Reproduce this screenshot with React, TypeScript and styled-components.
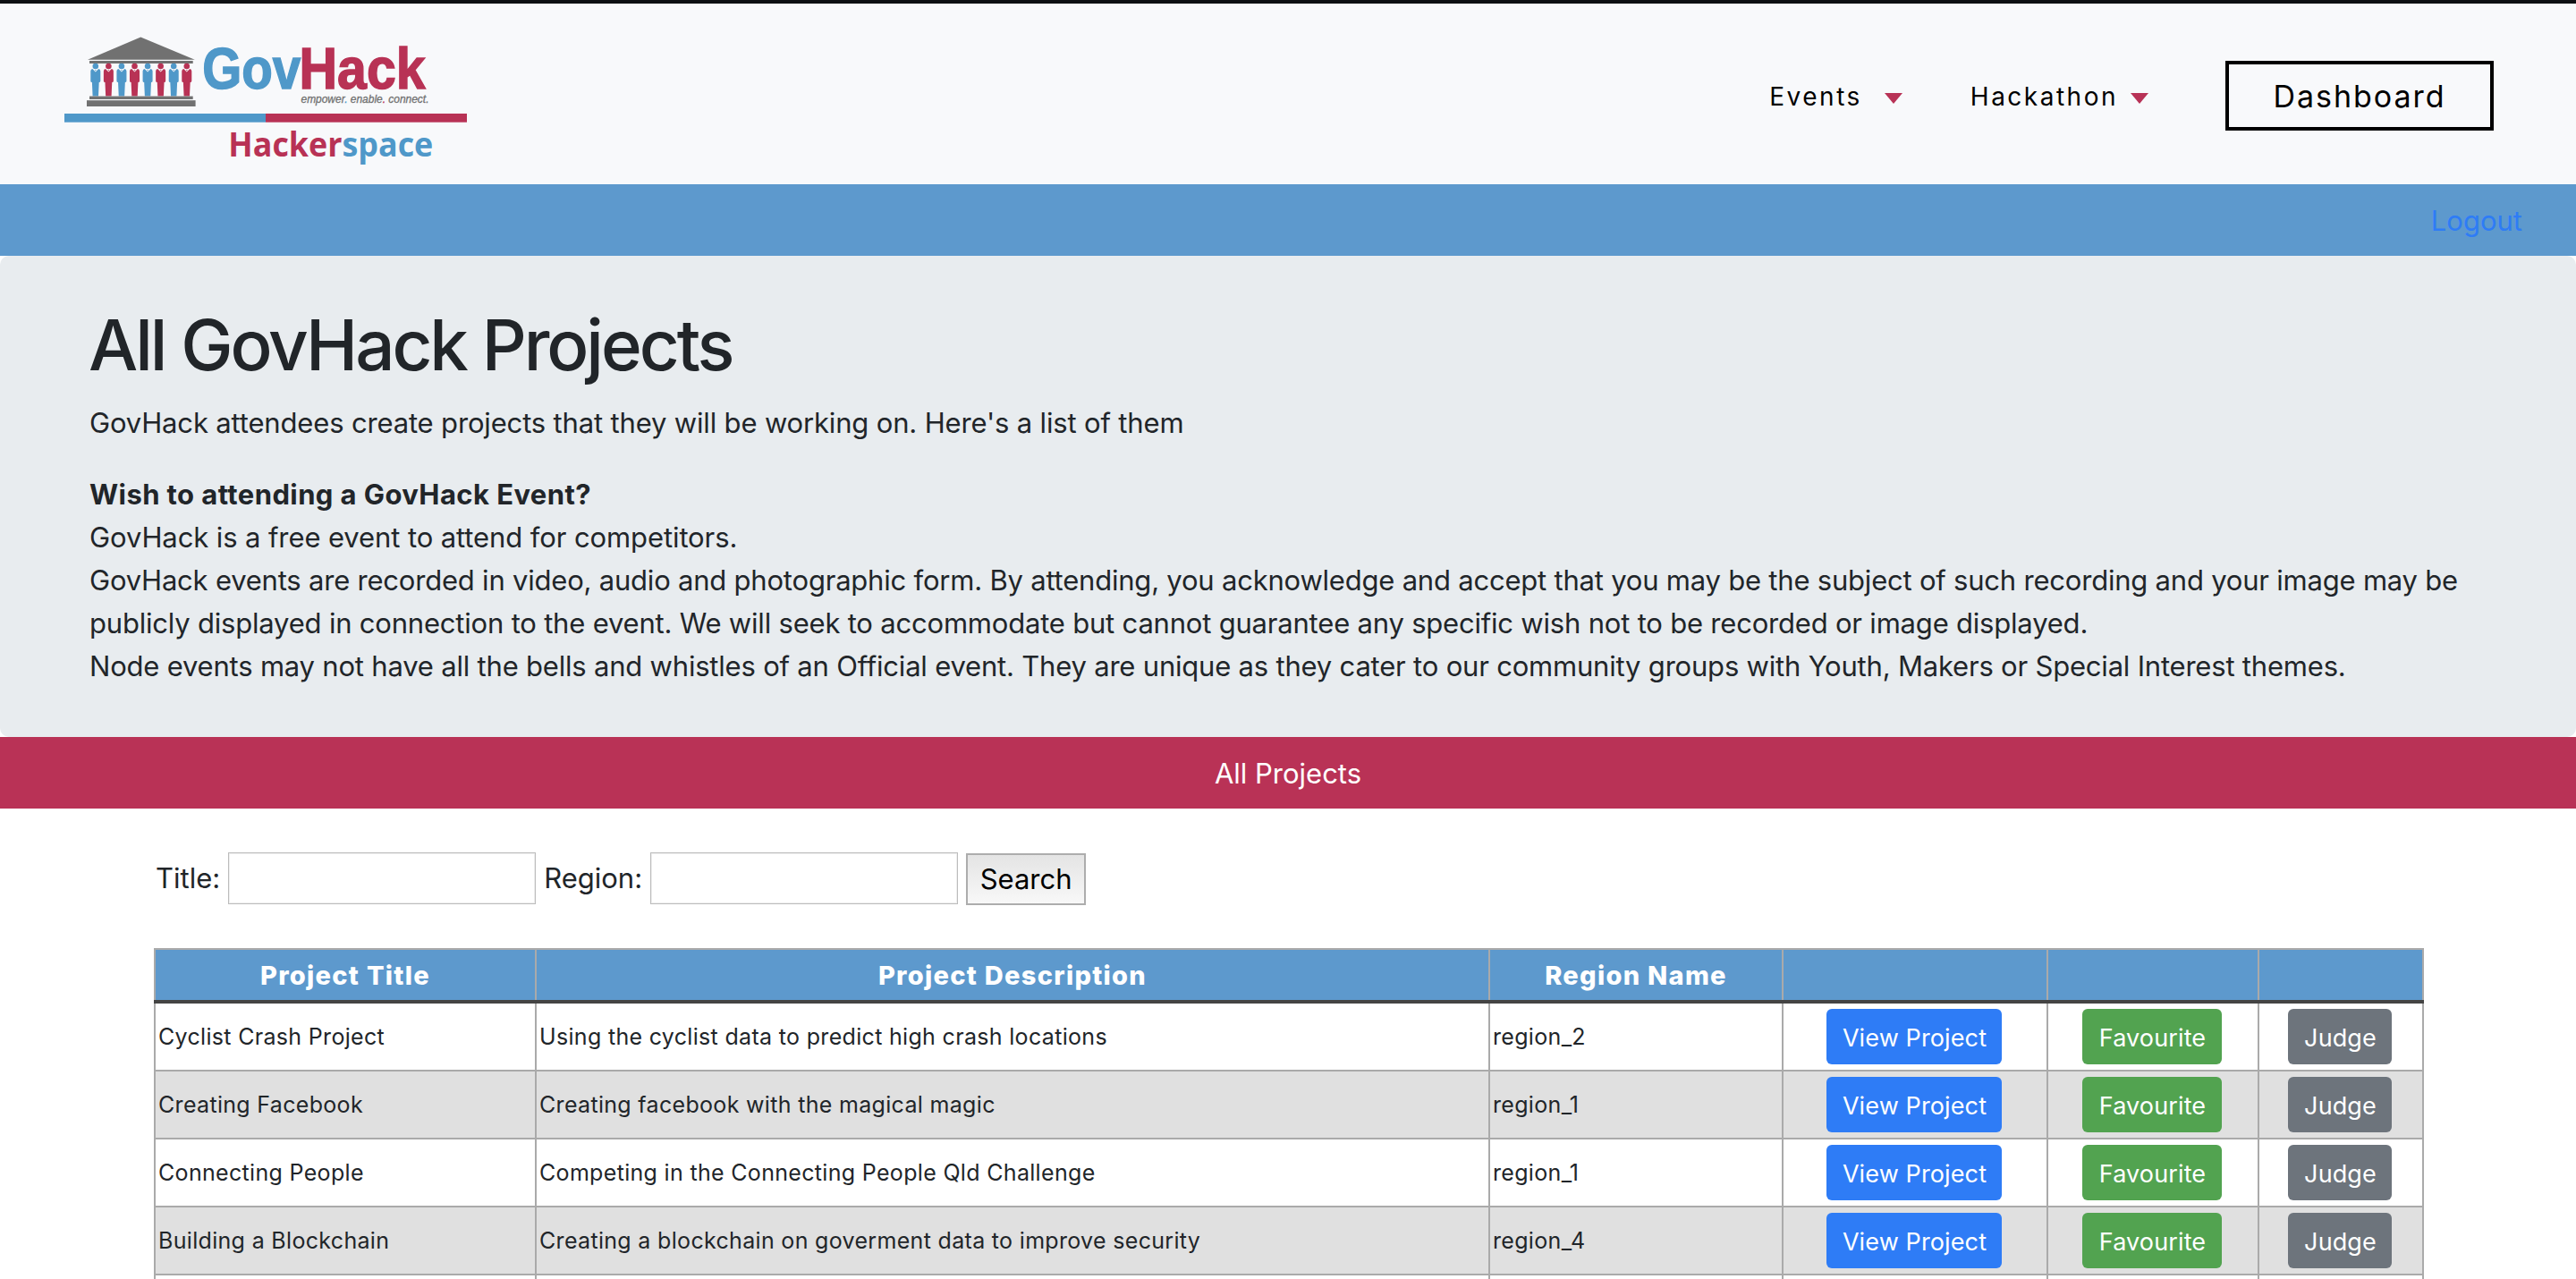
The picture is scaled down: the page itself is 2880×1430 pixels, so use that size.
import React from "react";
import styled, { createGlobalStyle } from "styled-components";

const GlobalStyle = createGlobalStyle`
  *, *::before, *::after { box-sizing: border-box; }
  html, body { margin: 0; padding: 0; background: #fff; }
  body {
    height: 1430px;
    overflow: hidden;
    font-family: Inter, "Noto Sans", sans-serif;
    font-size: 31px;
    line-height: 48px;
    color: #212529;
  }
`;

const Page = styled.div`
  display: flex;
  flex-direction: column;
  height: 1430px;
  overflow: hidden;
`;

const Header = styled.header`
  display: flex;
  flex: none;
  justify-content: space-between;
  align-items: flex-start;
  height: 206px;
  padding: 37px 92px 0 72px;
  border-top: 4px solid #0d0f12;
  background: #f8f9fb;
`;

const LogoLink = styled.a`
  display: block;
  line-height: 0;
`;

const Nav = styled.nav`
  display: flex;
  align-items: center;
  margin-top: 27px;
  height: 78px;
  color: #000;
`;

const NavItem = styled.a<{ $gap: number; $after: number }>`
  display: flex;
  align-items: center;
  gap: ${(p) => p.$gap}px;
  margin-right: ${(p) => p.$after}px;
  padding-top: 1px;
  font-size: 28px;
  letter-spacing: 2.5px;
  white-space: nowrap;
`;

const Caret = styled.i`
  width: 0;
  height: 0;
  margin-top: 5px;
  border: 10px solid transparent;
  border-top: 12px solid #b83256;
  border-bottom: 0;
`;

const DashboardButton = styled.a`
  display: flex;
  align-items: center;
  justify-content: center;
  width: 300px;
  height: 78px;
  padding-top: 1px;
  border: 4px solid #000;
  font-size: 34px;
  letter-spacing: 1.95px;
`;

const Band = styled.div<{ $tone: "blue" | "red" }>`
  display: flex;
  align-items: center;
  flex: none;
  justify-content: ${(p) => (p.$tone === "blue" ? "flex-end" : "center")};
  height: 80px;
  padding: 1px ${(p) => (p.$tone === "blue" ? "60px" : "0")} 0 0;
  background: ${(p) => (p.$tone === "blue" ? "#5d99cd" : "#b93256")};
  color: ${(p) => (p.$tone === "blue" ? "#2e7cf6" : "#fff")};
`;

const Jumbotron = styled.section`
  flex: none;
  height: 538px;
  padding: 52px 100px 0;
  border-radius: 10px;
  background: #e8ecef;
`;

const Title = styled.h1`
  margin: 0 0 15px -1px;
  font-size: 78px;
  font-weight: 500;
  line-height: 96px;
  letter-spacing: -3.05px;
  white-space: nowrap;
`;

const Lead = styled.p`
  margin: 0 0 32px;
  letter-spacing: -0.16px;
`;

const Line = styled.div<{ $bold?: boolean; $track?: number }>`
  font-weight: ${(p) => (p.$bold ? 700 : 400)};
  letter-spacing: ${(p) => p.$track ?? -0.2}px;
  white-space: nowrap;
`;

const SearchForm = styled.form`
  display: flex;
  align-items: center;
  flex: none;
  height: 60px;
  margin: 48px 0 48px 174px;
`;

const Field = styled.label`
  display: flex;
  align-items: center;
  gap: 9px;
  margin-right: 9px;
`;

const TextInput = styled.input`
  width: 344px;
  height: 58px;
  margin: 0;
  padding: 2px 6px;
  border: 1px solid #bcbcbc;
  border-radius: 0;
  box-shadow: inset 0 0 0 1px #efefef;
  background: #fff;
  font: inherit;
`;

const SearchButton = styled.button`
  width: 134px;
  height: 58px;
  margin-top: 2px;
  padding: 0;
  border: 2px solid #adadad;
  border-radius: 0;
  background: linear-gradient(#e4e4e4, #f8f8f8);
  color: #000;
  font: inherit;
`;

const Table = styled.div`
  flex: none;
  width: 2538px;
  margin-left: 172px;
  border-top: 2px solid #aaa;
  border-left: 2px solid #aaa;
`;

const columns = "426px 1066px 328px 296px 236px 184px";

const HeadRow = styled.div`
  display: grid;
  grid-template-columns: ${columns};
  height: 60px;
  margin-left: -2px;
  padding-left: 2px;
  border-bottom: 4px solid #444;
  background: linear-gradient(90deg, #aaa 2px, #5d99cd 2px);
`;

const HeadCell = styled.div`
  display: flex;
  align-items: center;
  justify-content: center;
  padding-top: 2px;
  border-right: 2px solid #aaa;
  color: #fff;
  font-size: 29px;
  font-weight: 800;
  letter-spacing: 1.3px;
`;

const Row = styled.div`
  display: grid;
  grid-template-columns: ${columns};
  height: 76px;
  background: #fff;

  &:nth-child(odd) {
    background: #e0e0e0;
  }
`;

const Cell = styled.div<{ $center?: boolean }>`
  display: flex;
  align-items: center;
  justify-content: ${(p) => (p.$center ? "center" : "flex-start")};
  padding: ${(p) => (p.$center ? "0 2px 0 0" : "0 3px")};
  border-right: 2px solid #aaa;
  border-bottom: 2px solid #aaa;
  font-size: 25px;
  letter-spacing: 0.32px;
  white-space: nowrap;
`;

const tones = { view: "#2e7cf6", favourite: "#52a350", judge: "#6d747c" };
const widths = { view: 196, favourite: 156, judge: 116 };

const ActionButton = styled.button<{ $kind: keyof typeof tones }>`
  width: ${(p) => widths[p.$kind]}px;
  height: 62px;
  padding: 2px 0 0 1px;
  border: 0;
  border-radius: 6px;
  background: ${(p) => tones[p.$kind]};
  color: #fff;
  font-family: inherit;
  font-size: 27px;
  letter-spacing: 0.12px;
`;

const blue = "#4f98c9";
const red = "#b83255";
const grey = "#717171";

function Person({ x, color }: { x: number; color: string }) {
  return (
    <g transform={`translate(${x} 0)`} fill={color}>
      <circle cx="0" cy="74" r="3.3" />
      <path d="M-3.4 77 L0 80.6 L3.4 77 Q5.4 77.2 5.5 79.5 V90.5 Q5.5 92 3.9 92 L3.2 107.5 H-3.2 L-3.9 92 Q-5.5 92 -5.5 90.5 V79.5 Q-5.4 77.2 -3.4 77 Z" />
      <path d="M-1 78.2 H1 L0 79.6 Z" />
    </g>
  );
}

function Logo() {
  return (
    <svg width="450" height="146" viewBox="72 41 450 146">
      <path d="M157.3 41.6 L217.8 66.7 H98 Z" fill={grey} />
      <rect x="100" y="68" width="115.7" height="3" fill={grey} />
      {Array.from({ length: 8 }, (_, i) => (
        <Person key={i} x={106.8 + i * 14.57} color={i % 2 ? red : blue} />
      ))}
      <rect x="100" y="107.6" width="115.7" height="3.4" fill={grey} />
      <rect x="97" y="112.2" width="121.6" height="6.8" fill={grey} />
      <g fontFamily="Liberation Sans, Arial, sans-serif" fontWeight="700" fontSize="65" strokeWidth="1.5">
        <text x="226.3" y="99" textLength="110" lengthAdjust="spacingAndGlyphs" fill={blue} stroke={blue}>
          Gov
        </text>
        <text x="334.5" y="99" textLength="141" lengthAdjust="spacingAndGlyphs" fill={red} stroke={red}>
          Hack
        </text>
      </g>
      <text
        x="336.5"
        y="115"
        fontFamily="Liberation Sans, Arial, sans-serif"
        fontStyle="italic"
        fontSize="13"
        textLength="143"
        lengthAdjust="spacingAndGlyphs"
        fill={grey}
        stroke={grey}
        strokeWidth="0.3"
      >
        empower<tspan fill={blue} stroke={blue}>.</tspan> enable<tspan fill={red} stroke={red}>.</tspan> connect.
      </text>
      <rect x="72" y="127" width="225" height="9.7" fill={blue} />
      <rect x="297" y="127" width="225" height="9.7" fill={red} />
      <text
        x="255.3"
        y="175"
        fontFamily="Open Sans, Noto Sans, sans-serif"
        fontWeight="700"
        fontSize="38"
        textLength="229"
        lengthAdjust="spacingAndGlyphs"
        fill={red}
      >
        Hacker<tspan fill={blue}>space</tspan>
      </text>
    </svg>
  );
}

const projects = [
  { title: "Cyclist Crash Project", description: "Using the cyclist data to predict high crash locations", region: "region_2" },
  { title: "Creating Facebook", description: "Creating facebook with the magical magic", region: "region_1" },
  { title: "Connecting People", description: "Competing in the Connecting People Qld Challenge", region: "region_1" },
  { title: "Building a Blockchain", description: "Creating a blockchain on goverment data to improve security", region: "region_4" },
];

const headings = ["Project Title", "Project Description", "Region Name", "", "", ""];

export default function App() {
  return (
    <Page>
      <GlobalStyle />
      <Header>
        <LogoLink>
          <Logo />
        </LogoLink>
        <Nav>
          <NavItem $gap={25} $after={76}>
            Events
            <Caret />
          </NavItem>
          <NavItem $gap={14} $after={86}>
            Hackathon
            <Caret />
          </NavItem>
          <DashboardButton>Dashboard</DashboardButton>
        </Nav>
      </Header>
      <Band $tone="blue">Logout</Band>
      <Jumbotron>
        <Title>All GovHack Projects</Title>
        <Lead>GovHack attendees create projects that they will be working on. Here's a list of them</Lead>
        <Line $bold $track={0.41}>Wish to attending a GovHack Event?</Line>
        <Line $track={-0.1}>GovHack is a free event to attend for competitors.</Line>
        <Line $track={-0.21}>
          GovHack events are recorded in video, audio and photographic form. By attending, you acknowledge and accept
          that you may be the subject of such recording and your image may be
        </Line>
        <Line>
          publicly displayed in connection to the event. We will seek to accommodate but cannot guarantee any specific
          wish not to be recorded or image displayed.
        </Line>
        <Line>
          Node events may not have all the bells and whistles of an Official event. They are unique as they cater to
          our community groups with Youth, Makers or Special Interest themes.
        </Line>
      </Jumbotron>
      <Band $tone="red">All Projects</Band>
      <SearchForm>
        <Field>
          Title: <TextInput />
        </Field>
        <Field>
          Region: <TextInput />
        </Field>
        <SearchButton type="button">Search</SearchButton>
      </SearchForm>
      <Table>
        <HeadRow>
          {headings.map((heading, i) => (
            <HeadCell key={i}>{heading}</HeadCell>
          ))}
        </HeadRow>
        {projects.map((project) => (
          <Row key={project.title}>
            <Cell>{project.title}</Cell>
            <Cell>{project.description}</Cell>
            <Cell>{project.region}</Cell>
            <Cell $center>
              <ActionButton $kind="view">View Project</ActionButton>
            </Cell>
            <Cell $center>
              <ActionButton $kind="favourite">Favourite</ActionButton>
            </Cell>
            <Cell $center>
              <ActionButton $kind="judge">Judge</ActionButton>
            </Cell>
          </Row>
        ))}
        <Row>
          {headings.map((_, i) => (
            <Cell key={i} />
          ))}
        </Row>
      </Table>
    </Page>
  );
}
